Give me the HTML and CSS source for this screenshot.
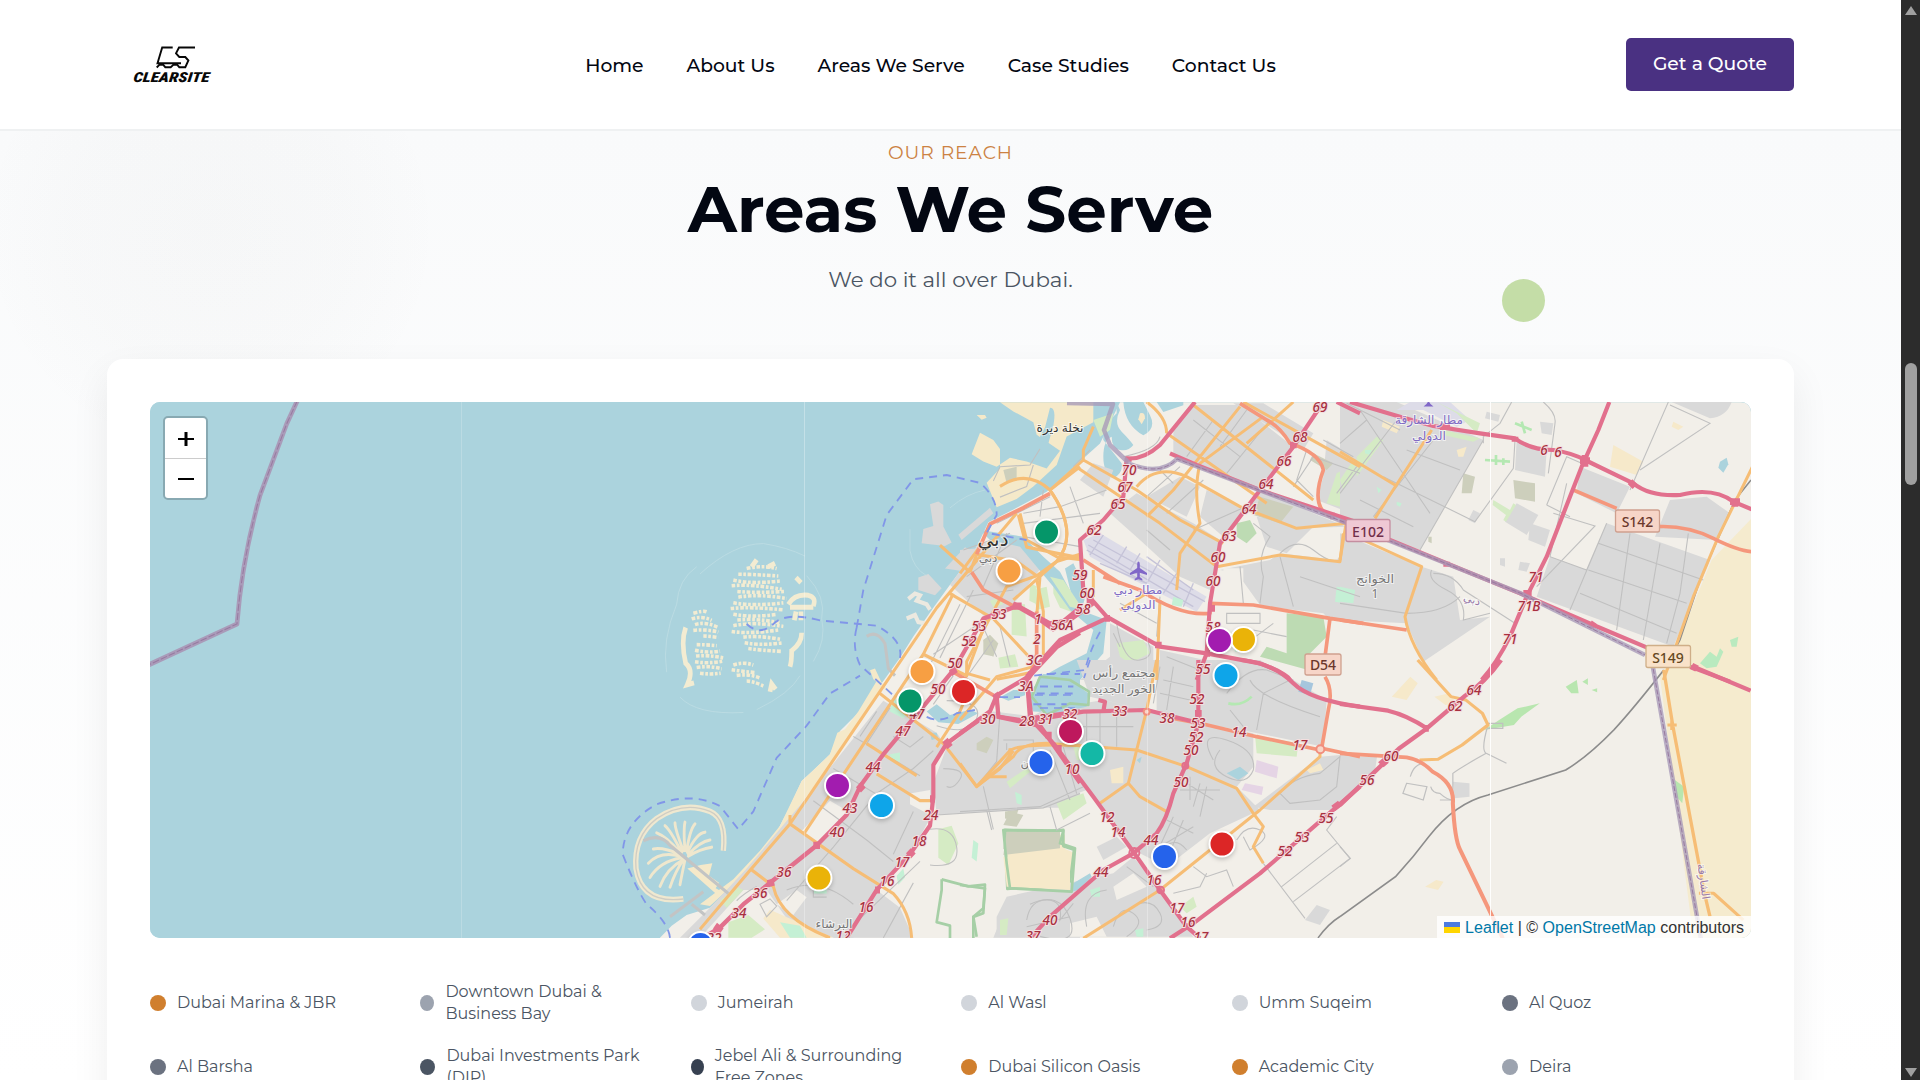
FILE: index.html
```html
<!DOCTYPE html>
<html lang="en">
<head>
<meta charset="utf-8">
<title>Clearsite – Areas We Serve</title>
<link rel="stylesheet" href="styles.css">
</head>
<body>
<div class="window">
<div class="page">
  <header class="site-header">
    <svg class="logo" viewBox="130 44 84 42" role="img" aria-label="Clearsite">
      <path class="logo-mark" d="M172.700 47.500H162.200L157.500 63.300H181M195 47.500H179L176 53.300L179.300 57H185.300L188.400 60.500L185.300 67.200H179.300L177.300 64.900H173.300L170.700 67.200H165.300L163.300 64.900H159.300L156.700 67.500"/>
      <text class="logo-text" transform="translate(133 82) skewX(-6)" textLength="76" lengthAdjust="spacingAndGlyphs">CLEARSITE</text>
    </svg>
    <nav class="nav">
      <a>Home</a><a>About Us</a><a>Areas We Serve</a><a>Case Studies</a><a>Contact Us</a>
    </nav>
    <a class="quote"><span>Get a Quote</span></a>
  </header>
  <main class="reach">
    <p class="eyebrow"><span>OUR REACH</span></p>
    <h1 class="title"><span>Areas We Serve</span></h1>
    <p class="lead"><span>We do it all over Dubai.</span></p>
    <section class="card">
      <div class="map">
        <svg class="tiles" viewBox="150 402 1601 536" preserveAspectRatio="none">
          <rect class="sea" x="150" y="402" width="1601" height="536"/>

          <!-- mainland and islands -->
          <g transform="translate(600 390) scale(.33333 .35714)">
            <path class="land" d="M180 1534L215 1500L260 1470L330 1450L400 1385L450 1330L520 1255L565 1175L605 1095L640 1065L690 1020L720 955L790 890L850 815L900 750L940 690L1000 610L1050 545L1110 470L1135 430L1165 370L1250 330L1340 285L1440 200L1500 150L1560 34H3500V1600H180Z"/>
            <path class="sand" d="M605 1095L640 1065L690 1020L712 960L735 950L775 900L830 815L850 830L700 1040L560 1210L440 1350L330 1445L300 1440L400 1370L480 1290L540 1220Z"/>
            <path class="sand" d="M1200 34L1240 60L1300 90L1310 125L1380 170L1340 220L1280 200L1230 190L1190 215L1150 200L1115 180L1140 120L1180 140L1200 165L1200 220L1160 260L1190 328L1250 305L1300 270L1370 210L1400 130L1480 90V34Z"/>
            <path class="sea" d="M1350 50q20 0 10 50l-15 50-30-10q10-20 20-35z"/>
            <path class="sand" d="M1130 70l25 0 5 8-15 5zM810 785l15-5 20 40 25 30-50-40z"/>
            <path class="grey" d="M990 320l25-8 15 10 0 60 25 45-20 10-70-8 5-40 30-8zM1075 405l95-75 10 15-95 75zM955 525l30-10 40 40-20 20-50-15zM1035 500l60-60 40 20-25 50z"/>
            <path class="coast" d="M925 585l20-15 15 5-10 15 30 10 10 15M920 640l25-10 10 20 30 5"/>
            <path class="white-line" d="M930 390l0 60q10 50 50 70M1050 330q50-40 105-50M855 1030"/>
            <path class="grey" d="M1050 545L1110 470L1135 430L1250 420L1330 490L1240 600L1160 640ZM850 870L1010 960L1040 1000L1000 1050V1140L990 1200L930 1300L830 1400L760 1534H700L560 1480L500 1400L430 1400L300 1534H240L330 1450L440 1340L620 1140Z"/>
            <path class="grey" d="M1040 1000L1180 900L1440 930V1170L1320 1170L1010 1190L1000 1100ZM1230 1420H1300L1440 1400V1534H1180ZM700 1534L830 1400L900 1450L940 1534Z"/>
            <path class="land" d="M600 1240L690 1150L745 1180L700 1230L650 1270ZM930 1130L990 1120V1190L930 1160ZM530 1440l60-40 30 20-40 50z"/>
            <path class="sandy" d="M510 1455L700 1534H580L540 1534L490 1480Z"/>
            <path class="lime" d="M385 1490l60-20 50 40-40 24h-70zM1195 750l50-10 10 35-55 5zM1235 600l40 0 5 90-45-5zM1290 540l20 10 0 50-22-10zM1360 540l30 10 20 60 30 20-60-20-20-40zM360 1430l50-40 20 10-50 50zM1170 590l30-10 10 20-30 8zM1015 1230l40-10 20 50-30 60-30-20z"/>
            <path class="mint" d="M880 860l50 40-20 20-40-20zM870 1020l30-5 0 25-25 0zM1120 1260l15 10-5 50-15-10zM1255 1060l50-30-50 60-30 15zM540 1490l60 10 20 34-50 0zM640 1385h40v25h-40zM890 1360l20-20 5 25-20 20z"/>
            <path class="sandy" d="M1215 1240l120 5 60 0 0 40 25 10-10 100-180-5z"/>
            <path class="olive" d="M1215 1235l115 5-10 40-110 5zM1150 700l20-15 20 20-15 40-25-5zM1125 1120l30 5-10 45-20-10zM1120 955l40-10-10 50-25 0zM1215 1180l40-5-10 30-30-5z"/>
            <path class="park" d="M1215 1232l115 5 60-5 0 45 32 10-15 115-130-10-55 5zM1025 1370l0 30-15 90 40 10v40M1025 1370l80 20 50-5-5 80-30 10v65"/>
            <path class="water" d="M1330 795L1440 800V870L1400 905L1300 900L1280 860ZM1200 860l40-20 35 0 0 15-50 15zM980 900l30-20 40 30 60-15 25 10-60 30-60-5zM1395 500l25-15 40 80-15 50-25-20zM990 960l20 0 5 15-20 5z"/>
            <path class="white-line" d="M200 790Q185 700 230 600Q235 530 290 495M300 515Q400 430 490 430Q560 440 615 465M620 520Q680 580 665 640Q680 700 640 760M240 860Q290 910 430 903M470 895Q570 850 600 800"/>
            <path class="isle-dots" d="M440 500q50-10 90 0M415 516q50 0 120 5M400 532q50 12 140 3M395 548q60-5 150 10M412 564q60 5 140 0M415 580q60-10 145 4M400 596q60 10 150 0M392 612q60-6 160 4M400 628q60 10 130 0M412 644q60-5 130 8M400 660q60-12 150 2M395 676q50 8 140-4M430 692q50-5 110 6M434 708q50 8 112 0M445 724q40 5 100 8M280 625q30-8 40-4M275 641q30-10 60 4M285 657q30-10 70 8M280 673q40-4 75 5M310 689q20 0 45 4M290 713q30 0 60 3M285 729q40 8 75 2M288 745q40-4 85 6M285 761q40 6 85-2M290 777q40-6 75 4M300 793q30 4 62 0M400 770q30-10 60 0M395 783q30 5 70 8M410 799q40-5 70 8M440 815q20 0 50 14"/>
            <path class="isle" d="M257 665q-15 40 0 100q25 20 5 60l20-5M455 495l15-20M505 495l20-10M588 525l15 15M565 600q20-30 60-25q25 5 15 30M570 608h70M588 620l-5 25M603 620v25M605 680q0 30-30 50q0 30-5 45M510 845l5-22 12 15"/>
            <!-- palm -->
            <path class="palm-rim" d="M370 1290Q380 1200 330 1180Q250 1150 170 1200Q100 1250 108 1340Q125 1440 250 1425"/>
            <path class="palm-edge" d="M370 1290Q380 1200 330 1180Q250 1150 170 1200Q100 1250 108 1340Q125 1440 250 1425"/>
            <path class="frond" d="M240 1300Q190 1280 160 1285M240 1305Q180 1290 145 1325M245 1310Q180 1320 150 1365M250 1315Q200 1340 180 1390M250 1315Q225 1350 210 1392M255 1315Q245 1360 240 1385M240 1295Q200 1250 170 1240M245 1295Q210 1230 195 1220M250 1290Q225 1230 225 1212M255 1290Q250 1230 255 1210M260 1290Q270 1230 285 1215M262 1295Q290 1240 315 1238M265 1300Q300 1265 330 1260M265 1305Q300 1285 335 1280"/>
            <path class="sand" d="M262 1340l40-10 35-5-10 35 30 20-10 15 20 10-20 5z"/>
            <path class="palm-road" d="M130 1262Q180 1240 210 1275L385 1410M210 1475L310 1405M275 1440l40 30M800 690q30-20 55 20l10 70 20 20"/>
          </g>

          <g transform="translate(960 390) scale(.33333)">
            <path class="water" d="M470 36L480 60Q460 100 485 125T520 165Q505 185 480 180T455 140Q430 150 430 200T460 265Q490 250 485 220L430 150V110L470 70ZM490 36q5 70 60 100q40-20 20-60l-20-40zM590 36l20 30 60-20v-10z"/>
            <path class="sandy" d="M540 70q15-5 15 15l-10 18-10-15z"/>
            <path class="water" d="M60 420L190 440L250 500L300 545L340 620L360 660L440 690L430 790L360 870H230L300 830L380 790L400 720L330 660L280 590L180 470L90 450Z"/>
            <path class="grey" d="M640 120L700 45H840L1000 170L900 300L720 230L640 195ZM820 40H910L1060 130L1030 180L960 130ZM1100 150L1200 210V380L1070 330L1090 260ZM450 370L530 310L700 400L780 450L750 600L660 560L540 450ZM740 300l120 60-70 80-70-60zM890 380l170 30-80 80-60-20zM900 300L1060 370L1160 410L1010 415L860 360ZM780 540L930 510L960 490L1130 510L1200 420V700L1100 680L1090 670L840 640V550ZM600 780L960 860V870H600ZM450 700l130 70 0 100-220 0 90-70zM0 480l100-10 70 30-20 60-60 50-90-50zM400 220l60 20-30 80-70-50zM560 320l100-60 60 30-40 90z"/>
            <path class="land" d="M790 535l60 0 0 40 50 70-110-5zM800 660h170l-10 90-70 10-90-20z"/>
            <path class="air" d="M370 450L420 430L740 620L710 665L560 590L390 500Z"/>
            <path class="runway" d="M385 465L700 650M400 450L735 635M380 480L560 580M560 500l140 100M420 520l140 60M430 435l-40 60M600 510l-40 70M650 550l-40 60M700 580l-30 70M500 470l-30 50M540 490l-30 50"/>
            <path class="lime" d="M400 90l60-20-10 50-30 20zM1130 250l40-20 20 40-50 80-40-10zM470 760l80-10 20 40-60 30-30-20zM270 560l40 10 60 90-40-10zM220 600l40-10 10 60-40 10zM1150 230l40-20 10 60-30 40z"/>
            <path class="mint" d="M1130 590l60 10-5 45-60-10zM640 620l30 10-5 20-30-5zM820 760l30 0 5 20-30 5z"/>
            <path class="grass" d="M980 670L1090 680L1100 740L1040 800L1080 850L900 800L920 770L980 790ZM830 400l40-10 20 40-30 30-30-20z"/>
            <path class="olive" d="M900 320l100 30-40 50-80-25zM70 750l20-10 25 20-15 40-20-10zM130 240l40-10 0 40-30 10zM1060 190l60 30-20 20-50-30z"/>
          </g>

          <g transform="translate(1340 390) scale(.33333)">
            <path class="sandbig" d="M1240 380L1115 510L1000 790L960 860L1060 1644H1240Z"/>
            <path class="grey" d="M0 36H170L430 150L240 480L0 400ZM0 430L245 530L200 700L0 690ZM200 700L245 530L340 560L360 690L450 680L250 815ZM720 230L870 290L830 370L710 310ZM800 400L1110 510L1000 770L590 620L630 500L740 540ZM990 330L1100 320L1170 370L1130 450L945 440ZM995 36H1175Q1160 80 1110 85ZM530 150l90 30-5 80-90-20zM530 340l65 35-35 60-65-40zM570 400l60 20-15 50-50-20zM440 65l40 10-5 20-40-10zM600 95l40 5-5 35-30-5zM480 505l15 0 0 25-15-5zM540 515l30 5-10 25-25-5zM400 360l20 10-15 30-20-10z"/>
            <path class="air" d="M170 60L210 36H330L390 90L350 110L250 60Z"/>
            <path class="lime" d="M290 36L420 100L410 130L350 70ZM310 120l110 25-20 10-90-20zM50 200l60-60 20 10-80 110zM0 270l40-60 10 30-40 60zM460 330l50 30 10-20 8 5-30 50-8-5 8-15-40-30z"/>
            <path class="mintline" d="M525 100l50 20M545 95l10 35M435 210l75 5M468 195v30M490 205v20"/>
            <path class="mint" d="M0 590l45 10-5 40-40-5zM75 180l20 0-5 15-15-5zM110 290l15 10-10 10zM170 335l15 5-5 10-10-5z"/>
            <path class="sandy" d="M820 165l90 50-20 40-80-25zM350 180l30-10-10 30-15 0zM1000 95l30 15-15 10-20-10zM130 90l50 20-10 20-45-20z"/>
            <path class="olive" d="M520 270l65 10 0 55-60-10zM370 250l35 10-10 50-30 0zM265 440l10 0 0 20-10-5z"/>
            <path class="water" d="M1140 215l20-12 5 20-15 25-15-15z"/>
            <path class="mint2" d="M1080 820l30-35 20 15 10-25 10 10-20 45-30 5zM1170 750l25-10-5 30-15 0z"/>
          </g>

          <g transform="translate(960 660) scale(.33333)">
            <path class="grey" d="M590 0H900L1100 120L1090 260L870 215L720 190L590 150ZM250 150L430 120L560 150L720 190L880 220V320L830 380L900 450L750 520L620 620L520 570L380 390L240 440L0 460V220L80 170H215ZM350 0H590L560 150L390 110ZM880 440L1080 290L1200 280V380L1130 450H930ZM140 710L460 640L520 590L600 690L700 830H110V770Z"/>
            <path class="land" d="M460 680l60-40 40 40-90 40zM330 790l80-20 30 60h-110zM640 700l60-60 130 0-70 60-60 60z"/>
            <path class="grey" d="M410 560l60-30 30 30-70 40z"/>
            <path class="sandbits" d="M130 590l180 0 20 50 0 50-190-10zM1040 330l40-20 10 20-40 10z"/>
            <path class="olive" d="M150 455l40 10-20 35-40-5zM50 250l30-20 20 10-20 40-30-10zM140 515l160 0 0 50-170 20z"/>
            <path class="lime" d="M290 430l80-30 10 30-70 50zM140 365l60-40 10 10-60 50zM120 780l25-5-5 50h-20zM660 740l40-30 10 30-30 20zM340 260l50 0 0 40-40 0zM885 225l130 25-5 40-120-10z"/>
            <path class="mint" d="M525 810l25-5 0 25h-20zM390 690l30-10 0 30-25 0zM165 395l20 10 0 30-15-5z"/>
            <path class="sandy" d="M450 330l40-10 0 50-35 0z"/>
            <path class="water" d="M240 50L330 60L385 100L380 140L260 165L215 110ZM800 340l40-20 25 20-30 20zM340 670l50-30 5 10-40 40-20 5zM530 300l15-10-5 20z"/>
            <path class="solar" d="M1025 60l35 10-10 35-35-10z"/>
            <path class="pink" d="M890 300l65 20-5 35-65-20zM855 370l55 10-5 25-60-15z"/>
            <path class="grey" d="M1070 735l40 15-30 45-45-15z"/>
            <path class="park" d="M130 510L310 512L300 550L345 565L335 695L150 685L140 610ZM0 675L75 685L70 745L40 770L50 830M240 50L330 60L387 95L385 135L330 130L260 165L215 110Z"/>
            <path class="limeline" d="M805 130q40 10 70-20"/>
          </g>

          <g transform="translate(1340 660) scale(.37 .33333)">
            <path class="grey" d="M0 290L100 290L95 330L0 415ZM305 365l45 5 0 40-40 5z"/>
            <path class="lime2" d="M430 180l50-35 60-15-50 40-20 25-80 15zM610 80l30-20 5 40-20 0zM655 65l15-10 0 20zM680 90l15-5 0 12zM905 360l25 20-5 50-15-20z"/>
            <path class="sandbits" d="M140 110l50-60 20 20-30 50zM255 110l40-10 20 30-30 5zM230 680l30-20 20 5-15 25z"/>
            <path class="minor" d="M180 370l55 10-10 40-55-20zM190 350q10-40 40-40M245 380q5 20 25 20q20 20 35 20"/>
          </g>

          <!-- minor streets -->
          <g class="minor" transform="translate(600 390) scale(.33333 .35714)">
            <path d="M1000 740L1160 640M1020 750L1120 560M1080 830L1180 700M990 770L1080 600M700 1060L880 1160M760 970L890 1040L960 1080M640 1150L800 1260L880 1320M700 1280L830 1130L940 1060L1000 1010M560 1430L700 1280M830 900L780 970M870 890L800 990M1180 255L1200 215L1290 210L1320 165M1200 300L1280 270L1300 210M1150 1110L1180 1230M1010 1190L1330 1170L1440 1130M1200 900L1190 1040L1130 1110M1390 1000L1430 1130M1030 1060Q1100 1060 1080 1090T1040 1110M780 1480Q870 1400 960 1320M850 1534L940 1380M990 1230Q1060 1220 1070 1280T990 1330M560 1400Q660 1360 760 1440M640 1380v40h40M880 1300L940 1180M1000 880L1060 800M1040 870Q1150 870 1130 920T1010 940M1290 1440q90-40 120 40t-90 50M480 1440l30-15 20 20-30 30zM470 1390q-40 20-60 40M880 970l50 30 40-30"/>
          </g>
          <g class="minor" transform="translate(960 390) scale(.33333)">
            <path d="M10 480L150 430M20 560L170 450M70 590L140 430M190 400L420 370M190 440L360 470M250 300L240 380M330 290L370 400M190 370L300 350L440 300M110 400L270 320M390 180L340 230M490 200Q590 180 600 140M760 90L680 200M860 60L780 170M700 90L840 200M930 90L800 250M600 240L640 280M560 320L660 230M620 370L730 270M700 420L880 340M560 420L630 480M1040 180L1010 270L1060 320M1000 290L1060 200L1200 250M880 400L930 440Q890 500 910 560L900 640M960 490Q1010 440 1060 480T1130 510M960 500L1000 650M840 530L850 640M800 670h100v30h-100zM940 700L860 760M880 720L980 740M620 800L720 840M480 640L590 700M600 620L590 740M470 700Q490 820 540 810T560 750M480 770L460 730M20 620L160 600M60 690L110 800M120 710L150 830M1130 310L1190 230M1090 150L1180 200M1020 560L1200 620"/>
          </g>
          <g class="minor" transform="translate(1340 390) scale(.33333)">
            <path d="M0 160L80 90M0 310L170 90M100 380L280 150M240 480L430 150M60 60L270 370M60 330L220 410M130 260L405 395M20 40L180 120M200 180L360 240M405 395L520 235L525 150M515 36L480 100L430 140L430 160M610 36Q650 70 645 100L625 250M985 36L870 300M990 45L1110 100L900 240M590 590L765 408L640 370M620 345L680 200L725 220M620 345L690 380M0 640L200 670Q310 670 360 620M275 540Q260 570 320 600T370 690L450 670M280 550Q340 550 370 600L525 700M870 430L830 720M960 460L910 750M1045 430L1020 610L980 760M800 400L690 660M720 610L1010 730M745 540L1040 640M775 460L1090 570M680 280L630 500L740 540L800 400"/>
          </g>
          <g class="minor" transform="translate(960 660) scale(.33333)">
            <path d="M380 150V250M420 150V250M470 160V260M330 200H520M130 240H220V280M140 250v20M270 270L330 420M0 455L240 440L370 380M270 440L290 510L390 460M600 20L580 130M640 20L620 150M610 60L700 80M600 100L690 120M800 100Q860 20 920 30L1000 60M810 150L850 200M870 60Q890 110 1080 170M890 210L910 100L990 60M780 270Q740 320 800 350T880 330Q890 270 800 240T760 300M680 370L760 420M690 350V420M720 370L700 440M660 390H780M740 380L720 470M620 480L700 520M640 470L590 580M670 480L620 600M700 500L600 560M960 400Q1000 350 1080 340L1140 290L1130 380L1080 420L990 430L960 400M1130 470L1100 510L1170 595L1000 725M1130 550L965 680M910 610L1035 775M700 620L740 650L800 630L820 680M600 580Q640 520 680 570M640 700L720 680L740 640M830 540Q860 490 900 510T870 570L850 530M200 780Q210 720 260 720T300 780L340 730M200 800L330 770M380 800Q360 700 440 690M460 800Q480 730 520 760T500 830M540 730q40-10 60 30t-40 50M80 450L95 510M500 620L580 680"/>
          </g>
          <g class="minor" transform="translate(1340 660) scale(.37 .33333)">
            <path d="M400 195Q380 270 395 280L450 310M395 280Q330 320 305 340V420H270M400 190h40v15h-40M0 560L28 595L0 620"/>
          </g>
          <path class="rail" transform="translate(1340 660) scale(.37 .33333)" d="M0 770L150 650Q200 590 240 530Q310 430 400 405L610 330Q670 290 740 210Q790 150 875 30"/>
          <path class="rail" d="M1318 938Q1328 924 1340 916.500M1668 662L1680 640L1700 580L1735 500L1751 480"/>

          <!-- orange secondary roads -->
          <g class="second" transform="translate(600 390) scale(.33333 .35714)">
            <path d="M300 1510L450 1345L570 1215L1010 610L1110 500L1250 345M570 1190V1215L760 1340L880 1410Q930 1460 935 1534M450 1340L520 1390Q540 1480 690 1534M610 1245L970 740L1060 570M1050 570L1180 640L1290 750M840 850L1030 990L1130 1110L1230 1010Q1250 990 1440 995M970 740L1100 800L1100 760L1220 550L1310 520L1370 480L1440 460M800 990L950 1080M830 1075L960 1150H1000M1020 435L1110 510M1200 270Q1280 220 1350 280L1440 215M1350 280Q1440 400 1370 480M1110 830L1080 900L1010 1000M1190 810L1300 790M1130 1110L1200 1060L1240 1010M1310 530L1330 620V750M1110 510L1130 460L1250 480L1310 520M1255 350L1280 440L1440 470"/>
          </g>
          <g class="second" transform="translate(960 390) scale(.33333)">
            <path d="M400 110L370 180V210L270 300M370 210L530 300L660 390L790 460M355 235L600 400L770 530L960 495L1140 515L1150 430M530 290Q590 220 680 260L840 350L1010 415L1160 400M620 130L920 340M700 45L1060 330M910 80L720 220Q700 300 720 400L660 490L650 600M850 36L1200 230M560 36Q620 80 620 130M840 50L640 300L560 380M400 540V620M600 630L590 870M860 160L1000 36M270 300Q360 430 290 515L160 630M180 370L200 450L290 500L370 510M0 550L60 470M90 870L20 850L80 690M240 560L230 680M480 660L560 610"/>
          </g>
          <g class="second" transform="translate(1340 390) scale(.33333)">
            <path d="M0 185L165 285M275 120L105 385M70 450L245 530L195 680Q210 770 290 870M0 510L20 390M1240 225L1135 440L1060 620L1000 790L970 870"/>
          </g>
          <g class="second" transform="translate(960 660) scale(.33333)">
            <path d="M0 310L50 380L160 290Q180 250 260 250L530 270L680 320L830 385L880 460L910 500L880 560L910 610M560 150L505 370L540 410L620 455M505 370L420 430M370 835L600 690L900 450L1080 290V270M590 0L560 150M150 265V300M90 350H140M0 180L110 50L220 20"/>
          </g>
          <g class="second" transform="translate(1340 660) scale(.37 .33333)">
            <path d="M210 0L300 110L340 120L385 160L400 195L330 255L265 298L215 300M875 30L900 200L985 700L1000 770M970 700H1010L1090 780M885 195h25M897 180v30"/>
          </g>

          <!-- trunk roads -->
          <g class="trunk">
            <path transform="translate(600 390) scale(.33333 .35714)" d="M1130 460L1170 375L1270 330L1350 290M1115 510L1150 560L1250 610M1060 790L1190 860L1195 910M1310 620V740L1290 800"/>
            <path transform="translate(960 390) scale(.33333)" d="M840 40L920 90Q960 110 990 160Q1080 190 1090 240Q1050 350 1110 380M370 510L480 580M430 560L540 600Q660 680 750 670V640L880 645L1110 685L1210 700M1110 685L1095 800"/>
            <path transform="translate(1340 390) scale(.33333)" d="M0 690L200 720M700 300L830 355M950 410Q1040 405 1120 445T1240 485"/>
            <path transform="translate(960 660) scale(.33333)" d="M1095 50Q1120 90 1105 150L1085 265L1200 290M720 190L890 230L1080 270M640 175L720 190"/>
            <path transform="translate(1340 660) scale(.37 .33333)" d="M0 280L180 292Q220 300 250 335Q310 370 305 430Q310 540 325 570L440 835"/>
          </g>

          <!-- motorways -->
          <g class="motor" transform="translate(600 390) scale(.33333 .35714)">
            <path d="M310 1534L360 1505L430 1440L510 1380L650 1275L740 1190L780 1110L850 1020L940 920L1060 785L1150 640L1250 605L1315 640L1360 670L1400 640L1440 610M1440 680L1370 720L1290 800L1190 855L1170 900L1040 990L1000 1050V1140L990 1220L930 1300L830 1400L740 1534M1190 855L1195 915L1320 940L1440 1100M1280 800L1290 920L1440 900"/>
            <path class="knot" d="M345 1500l20 15M510 1370l5 20M650 1265v20M775 1105l15 15M1035 980l15 20M990 1145h15M925 1290l15 15M825 1400h15M1055 780l10 15M1185 850l10 15M1240 605h25M1280 795l15 10"/>
          </g>
          <g class="motor" transform="translate(960 390) scale(.33333)">
            <path d="M705 36L600 165Q550 210 500 205L490 320L430 390L360 450L370 600L440 680L600 770L740 790L900 820Q980 850 990 870M160 640L270 700L330 690L400 640M440 685L300 750L200 860M1090 36L1000 170L870 340L780 460L750 640L740 790L710 870M630 190L710 225L900 300L1200 400M1130 36L1200 70"/>
            <path class="knot" d="M505 200v15M990 165h20M745 655h20M585 765h20M735 790h15M435 685h15M380 630h20M1110 378h15"/>
          </g>
          <g class="motor" transform="translate(1340 390) scale(.33333)">
            <path d="M30 36L180 80L280 108L420 130L525 145Q570 180 640 180Q700 190 735 210L880 280Q930 320 1020 315Q1120 290 1180 335L1240 360M808 36L775 120L725 230L620 500L560 620L510 740Q470 820 425 870M0 390L150 450L540 610L760 705L950 785M1050 830L1170 875"/>
            <path class="knot" d="M735 195v35M720 212h30M550 610h25M525 140v15M750 700l15 10M870 275l15 15M1170 335h30M1185 325v25M320 515v15M300 110h30"/>
          </g>
          <g class="motor" transform="translate(960 660) scale(.33333)">
            <path d="M0 220L80 165L215 185L250 175L370 155L560 150L720 190M200 50L215 180L280 250L400 410L520 575L600 690L680 800L720 835M520 580L430 630L270 770L210 835M520 580L590 520Q620 480 640 400L680 310L715 190V0M630 835L700 790L900 640L1200 380M845 0Q940 10 1000 70Q1050 120 1200 140M415 120l20 5-5 30"/>
            <path class="knot" d="M255 225h20M290 265h15M705 160h20M675 800h20M1120 445l20-15"/>
            <circle class="ring" cx="523" cy="579" r="15"/><circle class="ring" cx="676" cy="317" r="9"/><circle class="ring pale" cx="1081" cy="268" r="12"/><circle class="ring pale" cx="560" cy="155" r="9"/><circle class="ring" cx="602" cy="690" r="10"/>
          </g>
          <g class="motor" transform="translate(1340 660) scale(.37 .33333)">
            <path d="M435 0Q390 70 335 110L235 205L160 265L0 435M0 132L130 152Q180 165 235 205M955 20L1110 92"/>
            <path class="knot" d="M225 205h15M110 300l15 15M950 18l15 8"/>
          </g>

          <!-- borders, ferries, wetland -->
          <path class="border b2" d="M1067 403L1113 404L1104 430L1110 445L1130 464Q1160 476 1177 459L1365 530M1375 535L1450 565L1520 593L1645 655M1652 662L1702 945"/>
          <path class="border" transform="translate(140 390) scale(.33333 .35714)" d="M472 30L440 95L360 295Q305 480 291 655L25 770"/>
          <path class="border-core" transform="translate(140 390) scale(.33333 .35714)" d="M472 30L440 95L360 295Q305 480 291 655L25 770"/>
          <path class="border-core" d="M1130 464Q1160 476 1177 459L1365 530M1375 535L1450 565L1520 593L1645 655M1652 662L1702 945"/>
          <g class="ferry" transform="translate(600 390) scale(.33333 .35714)">
            <path d="M210 1534Q205 1490 140 1440Q110 1400 68 1300Q70 1210 170 1160Q280 1125 360 1165L415 1230L460 1180L530 1030L620 940L690 850L780 800M440 655Q480 690 520 655T660 645L830 660Q910 700 900 750M770 665Q755 720 780 770L880 855M770 665L790 560L860 350L940 250L1040 238L1140 260Q1190 300 1190 350L1160 400L1280 420M1340 795h100"/>
            <path d="M1310 850h110M1300 880h100M1320 830h100M980 915q40 20 90-10l60-10M1200 860h60"/>
          </g>
          <path class="ferry" d="M1100 632Q1090 650 1085 670L1030 676M1035 695h40M1040 708h35M1090 660l-6 18"/>

          <path class="seam" d="M461.500 402v536"/><path class="seam s2" d="M804.500 402v536M1147.500 402v536"/><path class="seam s3" d="M1490.500 402v536"/>

          <!-- exit numbers -->
          <g class="exits">
            <text x="999" y="619">53</text><text x="979" y="631">53</text><text x="969" y="646">52</text><text x="955" y="668">50</text><text x="938" y="694">50</text><text x="917" y="719">47</text><text x="903" y="736">47</text><text x="873" y="772">44</text><text x="850" y="813">43</text><text x="837" y="837">40</text><text x="784" y="877">36</text><text x="760" y="898">36</text><text x="739" y="918">34</text><text x="714" y="943">32</text><text x="931" y="820">24</text><text x="919" y="846">18</text><text x="902" y="867">17</text><text x="887" y="886">16</text><text x="866" y="912">16</text><text x="843" y="941">12</text>
            <text x="1038" y="624">1</text><text x="1037" y="644">2</text><text x="1062" y="630">56A</text><text x="1034" y="665">3C</text><text x="1026" y="691">3A</text><text x="988" y="724">30</text><text x="1027" y="726">28</text><text x="1046" y="724">31</text><text x="1070" y="719">32</text><text x="1072" y="774">10</text><text x="1050" y="925">40</text><text x="1033" y="941">37</text>
            <text x="1129" y="475">70</text><text x="1125" y="492">67</text><text x="1118" y="509">65</text><text x="1094" y="535">62</text><text x="1080" y="580">59</text><text x="1087" y="598">60</text><text x="1083" y="614">58</text><text x="1320" y="412">69</text><text x="1300" y="442">68</text><text x="1284" y="466">66</text><text x="1266" y="489">64</text><text x="1249" y="514">64</text><text x="1229" y="541">63</text><text x="1218" y="562">60</text><text x="1213" y="586">60</text><text x="1213" y="632">58</text><text x="1203" y="674">55</text>
            <text x="1544" y="455">6</text><text x="1558" y="457">6</text><text x="1536" y="582">71</text><text x="1529" y="611">71B</text><text x="1510" y="644">71</text>
            <text x="1120" y="716">33</text><text x="1167" y="723">38</text><text x="1197" y="704">52</text><text x="1198" y="728">53</text><text x="1196" y="742">52</text><text x="1191" y="755">50</text><text x="1181" y="787">50</text><text x="1239" y="737">14</text><text x="1300" y="750">17</text><text x="1107" y="822">12</text><text x="1118" y="837">14</text><text x="1151" y="845">44</text><text x="1101" y="877">44</text><text x="1154" y="885">16</text><text x="1177" y="913">17</text><text x="1188" y="927">16</text><text x="1201" y="942">17</text><text x="1285" y="856">52</text><text x="1302" y="842">53</text><text x="1326" y="823">55</text>
            <text x="1474" y="695">64</text><text x="1455" y="711">62</text><text x="1391" y="761">60</text><text x="1367" y="785">56</text>
          </g>
          <g class="places">
            <text class="dark" x="1060" y="432" textLength="47" lengthAdjust="spacingAndGlyphs">نخلة ديرة</text>
            <text class="city" x="993" y="546" textLength="31" lengthAdjust="spacingAndGlyphs">دبي</text><text x="988" y="562">دبي</text>
            <text class="air-name" x="1138" y="594" textLength="49" lengthAdjust="spacingAndGlyphs">مطار دبي</text><text class="air-name" x="1138" y="609" textLength="35" lengthAdjust="spacingAndGlyphs">الدولي</text>
            <text class="air-name" x="1429" y="424" textLength="68" lengthAdjust="spacingAndGlyphs">مطار الشارقة</text><text class="air-name" x="1429" y="440" textLength="34" lengthAdjust="spacingAndGlyphs">الدولي</text>
            <text x="1124" y="677" textLength="63" lengthAdjust="spacingAndGlyphs">مجتمع رأس</text><text x="1124" y="693" textLength="63" lengthAdjust="spacingAndGlyphs">الخور الجديد</text>
            <text x="1375" y="583" textLength="38" lengthAdjust="spacingAndGlyphs">الخوانج</text><text x="1375" y="598">1</text>
            <text x="834" y="928" textLength="37" lengthAdjust="spacingAndGlyphs">البرشاء</text><text x="1025" y="767">ن</text>
            <text class="prov" transform="translate(1471 603) rotate(18)">دبي</text>
            <text class="prov" transform="translate(1700 882) rotate(82)">الشارقة</text>
          </g>
          <path class="plane" d="M1138.500 561.500q1.300 0 1.300 2.500v4l7.200 5v2l-7.200-2.200v4.200l2.500 2v1.500l-3.800-1.200-3.800 1.200V579l2.500-2v-4.200L1130 575v-2l7.200-5v-4q0-2.500 1.300-2.500z"/>
          <path class="plane" d="M1428.500 401l2 3 3 2.500h-10l3-2.500z"/>
          <g class="shields">
            <rect class="e" x="1346" y="519.500" width="44" height="22" rx="2"/><text class="et" x="1368" y="536.500">E102</text>
            <rect x="1615.500" y="510" width="44" height="22" rx="2"/><text x="1637.500" y="526.500">S142</text>
            <rect class="y" x="1646" y="645.500" width="44.500" height="22" rx="2"/><text class="yt" x="1668" y="662.500">S149</text>
            <rect x="1305" y="654" width="36" height="21" rx="2"/><text x="1323" y="670">D54</text>
          </g>
          <g class="pins">
            <circle cx="1046.500" cy="532" r="12.500" fill="#059669"/><circle cx="1009" cy="571" r="12.500" fill="#f79f43"/><circle cx="1243.500" cy="639.500" r="12.500" fill="#eab308"/><circle cx="1219.500" cy="640.500" r="12.500" fill="#a21caf"/><circle cx="1226" cy="675.500" r="12.500" fill="#0ea5e9"/>
            <circle cx="922" cy="671.500" r="12.500" fill="#f79f43"/><circle cx="910" cy="701" r="12.500" fill="#059669"/><circle cx="963.500" cy="691.500" r="12.500" fill="#dc2626"/><circle cx="1070.500" cy="731.500" r="12.500" fill="#be185d"/><circle cx="1092" cy="753.500" r="12.500" fill="#14b8a6"/><circle cx="1041" cy="762.500" r="12.500" fill="#2563eb"/>
            <circle cx="837.500" cy="785.500" r="12.500" fill="#a21caf"/><circle cx="881.500" cy="805.500" r="12.500" fill="#0ea5e9"/><circle cx="819" cy="878" r="12.500" fill="#eab308"/><circle cx="1164.500" cy="856.500" r="12.500" fill="#2563eb"/><circle cx="1222" cy="844" r="12.500" fill="#dc2626"/><circle cx="700.500" cy="944.500" r="12.500" fill="#2563eb"/>
          </g>
        </svg>
        <div class="zoom"><a><svg viewBox="0 0 16 16"><path d="M0 8h16"/><path class="upright" d="M8 1v14"/></svg></a><a><svg viewBox="0 0 16 16"><path d="M0 8h16"/></svg></a></div>
        <div class="attribution"><i class="flag"></i><a>Leaflet</a> | © <a>OpenStreetMap</a> contributors</div>
      </div>
      <ul class="legend">
        <li><i class="dot orange"></i><span>Dubai Marina &amp; JBR</span></li>
        <li><i class="dot silver w14"></i><span>Downtown Dubai &amp;<br>Business Bay</span></li>
        <li><i class="dot light"></i><span>Jumeirah</span></li>
        <li><i class="dot light"></i><span>Al Wasl</span></li>
        <li><i class="dot light"></i><span>Umm Suqeim</span></li>
        <li><i class="dot slate"></i><span>Al Quoz</span></li>
        <li><i class="dot slate"></i><span>Al Barsha</span></li>
        <li><i class="dot deep w15"></i><span>Dubai Investments Park<br>(DIP)</span></li>
        <li><i class="dot navy w13"></i><span>Jebel Ali &amp; Surrounding<br>Free Zones</span></li>
        <li><i class="dot orange"></i><span>Dubai Silicon Oasis</span></li>
        <li><i class="dot orange"></i><span>Academic City</span></li>
        <li><i class="dot silver"></i><span>Deira</span></li>
      </ul>
    </section>
  </main>
  <div class="cursor"></div>
</div>
<div class="scrollbar"><i class="up"></i><i class="thumb"></i><i class="down"></i></div>
</div>
</body>
</html>
```
FILE: styles.css
```css
*{box-sizing:border-box}
body{margin:0;overflow:hidden;font-family:Montserrat,Inter,"Noto Sans",sans-serif;color:#030712}
.window{display:flex;height:1080px}
.page{position:relative;width:1901px;height:1080px;overflow:hidden;background:radial-gradient(circle 230px at 210px 230px,rgba(90,90,80,.025),rgba(90,90,80,.015) 60%,transparent),linear-gradient(#f9fafb 129px,#fff 1080px)}
.site-header{height:131px;display:flex;justify-content:space-between;align-items:center;padding:0 107px;background:#fff;border-bottom:2px solid #eff1f2}
.logo{width:84px;height:42px;margin:1px 21px 0 23px}
.logo-mark{fill:none;stroke:#080808;stroke-width:1.9}
.logo-text{font:italic 900 13.800px "Roboto Condensed","Liberation Sans Narrow",Roboto,sans-serif;fill:#080808}
.nav{display:flex;gap:42.900px;padding-top:2px;font-size:18.740px;font-weight:500;line-height:28px}
.quote{display:flex;justify-content:center;align-items:center;width:168px;height:53px;margin-top:-1px;padding-bottom:1px;border-radius:5px;background:#4a3182;color:#fff;font-size:18.740px;font-weight:500}
.reach{padding:11px 107px 0;text-align:center}
.eyebrow{margin:0;height:22px;line-height:22px;font-size:18.670px;letter-spacing:.96px;color:#cc8243}
.title{margin:5px 0 0;height:80px;line-height:80px;font-size:64.200px;font-weight:700}
.lead{margin:14px 0 0;height:33px;line-height:32px;font-size:21.330px;color:#4b5563}
.card{margin-top:63px;height:800px;padding:43px 43px 0;border-radius:16px;background:#fff;box-shadow:0 16px 38px rgba(0,0,0,.07);text-align:left}
.map{position:relative;height:536px;border-radius:10px;overflow:hidden;background:#abd3dd}
.tiles{display:block;width:100%;height:536px}
.sea{fill:#abd3dd}.land{fill:#f2efe9}.grey{fill:#d9d9d9}.sand{fill:#f5e9c9}.sandbig{fill:#f5ebce}.sandy,.sandbits{fill:#f6e9ca}
.lime{fill:#d5ebc4}.lime2{fill:#b8e6af}.mint{fill:#c4f0d5}.mint2{fill:#b9eabf}.grass{fill:#bddbb3}.olive{fill:#cdcfbc}.water{fill:#abd3dd}.air{fill:#dddce8}.solar{fill:#a6c6dd}.pink{fill:#e5d4e5}
.mintline,.limeline{fill:none;stroke:#b4e8b2;stroke-width:8}
.coast{fill:none;stroke:#ece9e0;stroke-width:12}
.park{fill:none;stroke:#a6cfa6;stroke-width:8;stroke-linejoin:round}
.white-line{fill:none;stroke:#c2dfe5;stroke-width:2}
.isle-dots{fill:none;stroke:#f3ecd2;stroke-width:10;stroke-dasharray:11 5 8 5}
.isle{fill:none;stroke:#f3ecd2;stroke-width:14}
.palm-rim{fill:none;stroke:#efe8d0;stroke-width:16}
.palm-edge{fill:none;stroke:#cfcdc4;stroke-width:4}
.frond{fill:none;stroke:#efe7cd;stroke-width:8.500;stroke-linecap:round}
.palm-road{fill:none;stroke:#c3c4c4;stroke-width:9}
.runway{fill:none;stroke:#c5c3d8;stroke-width:4}
.minor{fill:none;stroke:#c0c0c0;stroke-width:3.300}
.rail{fill:none;stroke:#8c8c8c;stroke-width:1.500}path.rail[transform]{stroke-width:4.600}
.second{fill:none;stroke:#f6bd75;stroke-width:9;stroke-linejoin:round}
.trunk path{fill:none;stroke:#f5977c;stroke-width:11;stroke-linejoin:round}
.motor{fill:none;stroke:#e2708d;stroke-width:12.500;stroke-linejoin:round}
.knot{stroke-width:20}.ring{stroke-width:6}.pale{fill:#f8d6c8;stroke:#f18e7e}
.border{fill:none;stroke:#a99bb9;stroke-width:14;stroke-linejoin:round}
.b2{stroke-width:4.500;opacity:.8}
.border-core{fill:none;stroke:#9879a0;stroke-width:1;stroke-dasharray:5 2}path.border-core[transform]{stroke-width:3;stroke-dasharray:20 6}
.ferry{fill:none;stroke:#8196e8;stroke-width:1.700;stroke-dasharray:8 6}g.ferry{stroke-width:5.400}g.ferry,g.ferry path{stroke-dasharray:24 18}
.seam{fill:none;stroke:#fff;opacity:.2}.s2{opacity:.3}.s3{opacity:.9}
.exits{font:italic 500 13.500px "Noto Sans",sans-serif;fill:#a8303f;text-anchor:middle;paint-order:stroke;stroke:#f3dfdf;stroke-width:2px}
.places{font:12px "Noto Sans","DejaVu Sans",sans-serif;fill:#777;text-anchor:middle;paint-order:stroke;stroke:rgba(255,255,255,.6);stroke-width:2px}
.dark{fill:#333}.city{fill:#333;font-size:19px}.air-name{fill:#806bc4}.prov{fill:#9879a8;font-size:11px}
.plane{fill:#8067c8}
.shields rect{fill:#f7d5c8;stroke:#cfa08f;stroke-width:1.300}.shields .e{fill:#efc8d4;stroke:#c58ea0}.shields .y{fill:#f9e2c9;stroke:#cfae88}
.shields text{font:500 14px "Noto Sans",sans-serif;fill:#6b382c;text-anchor:middle}.shields .et{fill:#712f4a}.shields .yt{fill:#644822}
.pins circle{stroke:#fff;stroke-width:2}
.pins{filter:drop-shadow(0 2px 2px rgba(0,0,0,.2))}
.zoom{position:absolute;left:13px;top:14px;width:45px;border:2px solid #88a9b2;border-radius:5px;background:#fff;overflow:hidden}
.zoom a{display:flex;height:40px;align-items:center;justify-content:center}
.zoom a+a{border-top:1px solid #ccc}
.zoom svg{width:16px;height:16px;margin-top:1px;fill:none;stroke:#000;stroke-width:2}
.zoom .upright{stroke-width:3}
.attribution{position:absolute;right:0;bottom:0;height:22px;padding:0 7px;white-space:nowrap;background:rgba(255,255,255,.8);font:16.050px/22px "Liberation Sans",Arial,sans-serif;color:#333}
.attribution a{color:#0078a8}
.flag{display:inline-block;width:16px;height:11px;margin-right:5px;background:linear-gradient(#4c7be1 50%,#ffd500 50%)}
.legend{list-style:none;margin:43px 0 0;padding:0;display:grid;grid-template-columns:repeat(6,1fr);column-gap:21.500px;row-gap:21px;font-size:16px;line-height:21.400px;color:#4b5563}
.legend li{display:flex;align-items:center;gap:11px;height:43px;white-space:nowrap}
.dot{flex:none;width:16px;height:16px;border-radius:50%}
.w15{width:15px}.w14{width:14px}.w13{width:13px}
.orange{background:#d07f2e}.silver{background:#9ca3af}.light{background:#d1d5db}.slate{background:#6b7280}.deep{background:#4b5563}.navy{background:#374151}
.cursor{position:absolute;left:1502px;top:279px;width:43px;height:43px;border-radius:50%;background:#c4dda7}
.scrollbar{width:19px;height:1080px;background:#2c2c2c;display:flex;flex-direction:column;align-items:center}
.up,.down{width:0;height:0;border:6px solid transparent}
.up{border-bottom:9px solid #a0a0a0}
.thumb{width:12px;height:122px;margin-top:348px;border-radius:6px;background:#a0a0a0}
.down{margin-top:auto;border-top:9px solid #a0a0a0;border-bottom-width:3px}
```
